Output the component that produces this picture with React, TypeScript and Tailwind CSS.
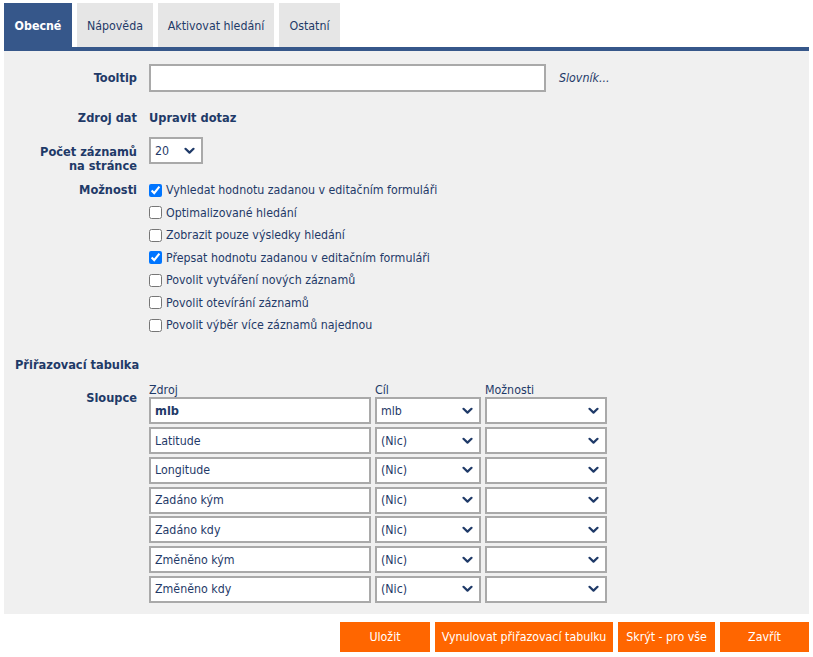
import React from "react";

const NAVY = "text-[#1f3a68]";

function Chevron() {
  return (
    <svg width="11" height="8" viewBox="0 0 11 8" className="shrink-0">
      <polyline points="1.5,1.8 5.5,5.6 9.5,1.8" fill="none" stroke="#1f3a68" strokeWidth="2.2" strokeLinecap="round" strokeLinejoin="round" />
    </svg>
  );
}

function SelectBox({ value, w }: { value: string; w: string }) {
  return (
    <div className={`${w} h-[27px] flex items-center justify-between border-2 border-[#a9a9a9] bg-white pl-[4px] pr-[6px] ${NAVY}`}>
      <span>{value}</span>
      <Chevron />
    </div>
  );
}

const options: [string, boolean][] = [
  ["Vyhledat hodnotu zadanou v editačním formuláři", true],
  ["Optimalizované hledání", false],
  ["Zobrazit pouze výsledky hledání", false],
  ["Přepsat hodnotu zadanou v editačním formuláři", true],
  ["Povolit vytváření nových záznamů", false],
  ["Povolit otevírání záznamů", false],
  ["Povolit výběr více záznamů najednou", false],
];

const rows: [string, string][] = [
  ["mlb", "mlb"],
  ["Latitude", "(Nic)"],
  ["Longitude", "(Nic)"],
  ["Zadáno kým", "(Nic)"],
  ["Zadáno kdy", "(Nic)"],
  ["Změněno kým", "(Nic)"],
  ["Změněno kdy", "(Nic)"],
];

const LBL = "w-[133px] text-right font-bold text-[12.7px]";

export default function App() {
  return (
    <div
      className={`w-[813px] h-[657px] bg-white text-[12.3px] leading-[16px] ${NAVY}`}
      style={{ fontFamily: '"DejaVu Sans Condensed", "DejaVu Sans", sans-serif', fontStretch: "condensed" }}
    >
      <div className="px-[4px] pt-[3px]">
        {/* tabs */}
        <div className="flex items-start gap-[5px] h-[44px]">
          <div className="w-[68px] h-[44px] bg-[#36578a] text-white font-bold flex items-center justify-center pt-[2px]">Obecné</div>
          <div className="w-[76px] h-[44px] bg-[#e6e6e6] flex items-center justify-center pt-[2px]">Nápověda</div>
          <div className="w-[116px] h-[44px] bg-[#e6e6e6] flex items-center justify-center pt-[2px]">Aktivovat hledání</div>
          <div className="w-[61px] h-[44px] bg-[#e6e6e6] flex items-center justify-center pt-[2px]">Ostatní</div>
        </div>
        <div className="h-[4px] bg-[#36578a]" />
        {/* panel */}
        <div className="bg-[#f0f0f0] h-[563px] pt-[13px]">
          <div className="flex items-center h-[28px]">
            <div className={LBL}>Tooltip</div>
            <div className="ml-[12px] w-[397px] h-[28px] bg-white border-2 border-[#a9a9a9]" />
            <div className="ml-[13px] italic">Slovník...</div>
          </div>
          <div className="flex mt-[18px] h-[16px] items-center">
            <div className={LBL}>Zdroj dat</div>
            <div className="ml-[12px] font-bold text-[12.7px]">Upravit dotaz</div>
          </div>
          <div className="flex mt-[11px]">
            <div className={`${LBL} leading-[14px] pt-[8px]`}>Počet záznamů<br />na stránce</div>
            <div className="ml-[12px]">
              <SelectBox value="20" w="w-[54px]" />
            </div>
          </div>
          <div className="flex mt-[6px]">
            <div className={`${LBL} leading-[22.5px]`}>Možnosti</div>
            <div className="ml-[12px] flex flex-col">
              {options.map(([t, c]) => (
                <label key={t} className="flex items-center h-[22.5px]">
                  <input type="checkbox" defaultChecked={c} className="m-0 w-[13px] h-[13px] accent-[#0075ff]" />
                  <span className="ml-[4px]">{t}</span>
                </label>
              ))}
            </div>
          </div>
          <div className="mt-[20px] ml-[11px] font-bold text-[12.7px]">Přiřazovací tabulka</div>
          <div className="flex mt-[9px]">
            <div className={`${LBL} pt-[8px]`}>Sloupce</div>
            <div className="ml-[12px] grid grid-cols-[222px_106px_122px] gap-x-[4px] gap-y-[2.75px]">
              <div className="h-[13px] leading-[13px] pt-[2px]">Zdroj</div>
              <div className="h-[13px] leading-[13px] pt-[2px]">Cíl</div>
              <div className="h-[13px] leading-[13px] pt-[2px]">Možnosti</div>
              {rows.map(([s, c], i) => (
                <React.Fragment key={s}>
                  <div className={`h-[27px] border-2 border-[#a9a9a9] bg-white pl-[4px] flex items-center ${i === 0 ? "font-bold text-[12.7px]" : ""}`}>{s}</div>
                  <SelectBox value={c} w="w-[106px]" />
                  <SelectBox value="" w="w-[122px]" />
                </React.Fragment>
              ))}
            </div>
          </div>
        </div>
        {/* buttons */}
        <div className="flex justify-end gap-[5px] mt-[8px]">
          <div className="w-[90px] h-[30px] bg-[#ff6600] text-white flex items-center justify-center">Uložit</div>
          <div className="w-[178px] h-[30px] bg-[#ff6600] text-white flex items-center justify-center">Vynulovat přiřazovací tabulku</div>
          <div className="w-[97px] h-[30px] bg-[#ff6600] text-white flex items-center justify-center">Skrýt - pro vše</div>
          <div className="w-[89px] h-[30px] bg-[#ff6600] text-white flex items-center justify-center">Zavřít</div>
        </div>
      </div>
    </div>
  );
}
